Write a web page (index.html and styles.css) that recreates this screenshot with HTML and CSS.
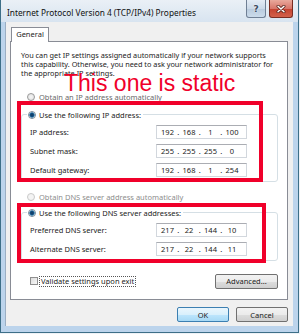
FILE: index.html
```html
<html lang="en">
<head>
    <meta charset="UTF-8">
    <meta name="viewport" content="width=device-width, initial-scale=1.0">
    <title>Internet Protocol Version 4 (TCP/IPv4) Properties</title>
    <link rel="stylesheet" href="styles.css">
</head>
<body>

    <div class="window">
        <div class="titlebar">
            <span class="title">Internet Protocol Version 4 (TCP/IPv4) Properties</span>
            <div class="caption">
                <span class="cap-btn help">?</span>
                <span class="cap-btn close">
                    <svg width="10" height="8" viewBox="0 0 10 8">
                        <path d="M2 1.2 L8 6.8 M8 1.2 L2 6.8" stroke="#5b2219" stroke-width="3" stroke-linecap="round"/>
                        <path d="M2 1.2 L8 6.8 M8 1.2 L2 6.8" stroke="#fff" stroke-width="1.5" stroke-linecap="round"/>
                    </svg>
                </span>
            </div>
        </div>

        <div class="client">
            <div class="tabs"><span class="tab">General</span></div>

            <div class="panel">
                <p class="intro">You can get IP settings assigned automatically if your network supports this capability. Otherwise, you need to ask your network administrator for the appropriate IP settings.</p>

                <div class="option"><span class="radio"></span>Obtain an IP address automatically</div>

                <fieldset class="group">
                    <legend><span class="radio on"></span>Use the following IP address:</legend>
                    <div class="rows">
                        <span>IP address:</span>
                        <div class="ip"><span class="seg">192</span><span class="dot">.</span><span class="seg">168</span><span class="dot">.</span><span class="seg">1</span><span class="dot">.</span><span class="seg">100</span></div>
                        <span>Subnet mask:</span>
                        <div class="ip"><span class="seg">255</span><span class="dot">.</span><span class="seg">255</span><span class="dot">.</span><span class="seg">255</span><span class="dot">.</span><span class="seg">0</span></div>
                        <span>Default gateway:</span>
                        <div class="ip"><span class="seg">192</span><span class="dot">.</span><span class="seg">168</span><span class="dot">.</span><span class="seg">1</span><span class="dot">.</span><span class="seg">254</span></div>
                    </div>
                </fieldset>

                <div class="option disabled"><span class="radio"></span>Obtain DNS server address automatically</div>

                <fieldset class="group dns">
                    <legend><span class="radio on"></span>Use the following DNS server addresses:</legend>
                    <div class="rows">
                        <span>Preferred DNS server:</span>
                        <div class="ip"><span class="seg">217</span><span class="dot">.</span><span class="seg">22</span><span class="dot">.</span><span class="seg">144</span><span class="dot">.</span><span class="seg">10</span></div>
                        <span>Alternate DNS server:</span>
                        <div class="ip"><span class="seg">217</span><span class="dot">.</span><span class="seg">22</span><span class="dot">.</span><span class="seg">144</span><span class="dot">.</span><span class="seg">11</span></div>
                    </div>
                </fieldset>

                <div class="bottom-row">
                    <label class="check"><span class="box"></span><span class="focus">Validate settings upon exit</span></label>
                    <button class="btn advanced">Advanced...</button>
                </div>
            </div>

            <div class="dialog-buttons">
                <button class="btn default">OK</button>
                <button class="btn">Cancel</button>
            </div>
        </div>

        <!-- red annotations drawn over the dialog -->
        <div class="note">This one is static</div>
        <div class="mark mark-ip"></div>
        <div class="mark mark-dns"></div>
    </div>

</body>
</html>
```

FILE: styles.css
```css
* {
    box-sizing: border-box;
}
body {
    margin: 0;
    background: #eef2f7;
    font-family: "Noto Sans", sans-serif;
    font-size: 7.5px;
    color: #1b1b1b;
}
.window {
    position: relative;
    width: 299px;
    height: 333px;
    background: #bcd4ec;
    border: 1px solid #3d6f88;
    border-top: 0;
}
.titlebar {
    height: 22px;
    display: flex;
    justify-content: space-between;
    align-items: flex-start;
    padding: 0 5px 0 6px;
    background: linear-gradient(#eaf0f6, #d8e4f0);
}
.title {
    line-height: 25px;
    font-size: 8.3px;
    color: #111;
}
.caption {
    display: flex;
    gap: 3px;
}
.cap-btn {
    height: 18px;
    display: flex;
    align-items: center;
    justify-content: center;
    border: 1px solid #6f7f94;
    border-top: 0;
    border-radius: 0 0 3px 3px;
}
.help {
    width: 20px;
    background: linear-gradient(#e4ecf5, #cbd9e8 50%, #b8cadd 51%, #cbdbeb);
    font: bold 9px "DejaVu Sans", sans-serif;
    color: #3b4b5f;
    text-shadow: 0 0 2px #fff;
}
.close {
    width: 24px;
    border-color: #7a2d22;
    background: linear-gradient(#e9a99c, #d7766a 50%, #c4412f 51%, #d3614b);
}
.client {
    height: 304px;
    margin: 0 5px 0 4px;
    padding: 5px 5px 4px 4px;
    background: #f0f0f0;
    border-left: 1px solid #9aaec3;
}
.tabs {
    height: 14px;
}
.tab {
    position: relative;
    display: block;
    width: 38px;
    height: 15px;
    margin-left: 1px;
    border: 1px solid #898c95;
    border-bottom: 0;
    background: #fff;
    text-align: center;
    line-height: 13px;
}
.panel {
    height: 259px;
    padding: 0 9px 0 10px;
    border: 1px solid #898c95;
    background: #fff;
}
.intro {
    margin: 9px 0 0;
    font-size: 7.3px;
    line-height: 9.2px;
}
.option {
    display: flex;
    align-items: center;
    gap: 4px;
    height: 10px;
    margin-top: 13px;
    padding-left: 6px;
    color: #6a6a6a;
}
.option.disabled {
    margin-top: 10px;
    color: #8d8d8d;
}
.radio {
    width: 8px;
    height: 8px;
    border: 1px solid #9a9a9a;
    border-radius: 50%;
    background: radial-gradient(circle, #f6f6f6, #dedede);
}
.option.disabled .radio {
    border-color: #c9c9c9;
    background: #f4f4f4;
}
.radio.on {
    border-color: #7b8a99;
    background: radial-gradient(circle, #103f6b 0 1.4px, #2f86bd 2.4px, #e8e8e8 3px, #f6f6f6);
}
.group {
    margin: 8px 0 0;
    padding: 5px 6px 4px 5px;
    min-width: 0;
    border: 1px solid #d5dfe5;
    border-radius: 3px;
}
.group.dns {
    margin-top: 6px;
}
.group legend {
    display: flex;
    align-items: center;
    gap: 3px;
    height: 10px;
    padding: 0 2px 0 1px;
}
.rows {
    display: grid;
    grid-template-columns: 126px 91px;
    grid-auto-rows: 14px;
    row-gap: 5px;
    align-items: center;
    padding-left: 3px;
}
.ip {
    height: 14px;
    display: flex;
    align-items: center;
    padding-left: 2px;
    border: 1px solid #d2d7dd;
    border-top-color: #abadb3;
}
.seg {
    width: 17px;
    text-align: center;
}
.dot {
    width: 4.5px;
    text-align: center;
}
.bottom-row {
    display: flex;
    justify-content: space-between;
    align-items: center;
    height: 15px;
    margin-top: 13px;
    padding-left: 9px;
}
.check {
    display: flex;
    align-items: center;
    gap: 2px;
}
.box {
    width: 8px;
    height: 8px;
    border: 1px solid #8f8f8f;
    background: linear-gradient(135deg, #dcdcdc, #f8f8f8);
}
.focus {
    padding: 0 1px;
    line-height: 9px;
    outline: 1px dotted #555;
}
.btn {
    height: 15px;
    padding: 0;
    font: inherit;
    color: #1b1b1b;
    border: 1px solid #707070;
    border-radius: 2px;
    background: linear-gradient(#f2f2f2, #ebebeb 50%, #dddddd 51%, #cfcfcf);
}
.advanced {
    width: 63px;
}
.dialog-buttons {
    display: flex;
    justify-content: flex-end;
    gap: 7px;
    margin-top: 7px;
}
.dialog-buttons .btn {
    width: 52px;
}
.btn.default {
    border-color: #3c7fb1;
    background: linear-gradient(#eaf6fd, #d9f0fc 50%, #bee6fd 51%, #a7d9f5);
}
.note {
    position: absolute;
    left: 63px;
    top: 72px;
    font: 23px/23px "Liberation Sans", Arial, sans-serif;
    color: #f0002a;
    white-space: nowrap;
}
.mark {
    position: absolute;
    border: 4px solid #f0002a;
}
.mark-ip {
    left: 16px;
    top: 101px;
    width: 246px;
    height: 81px;
}
.mark-dns {
    left: 16px;
    top: 203px;
    width: 249px;
    height: 60px;
}
```
